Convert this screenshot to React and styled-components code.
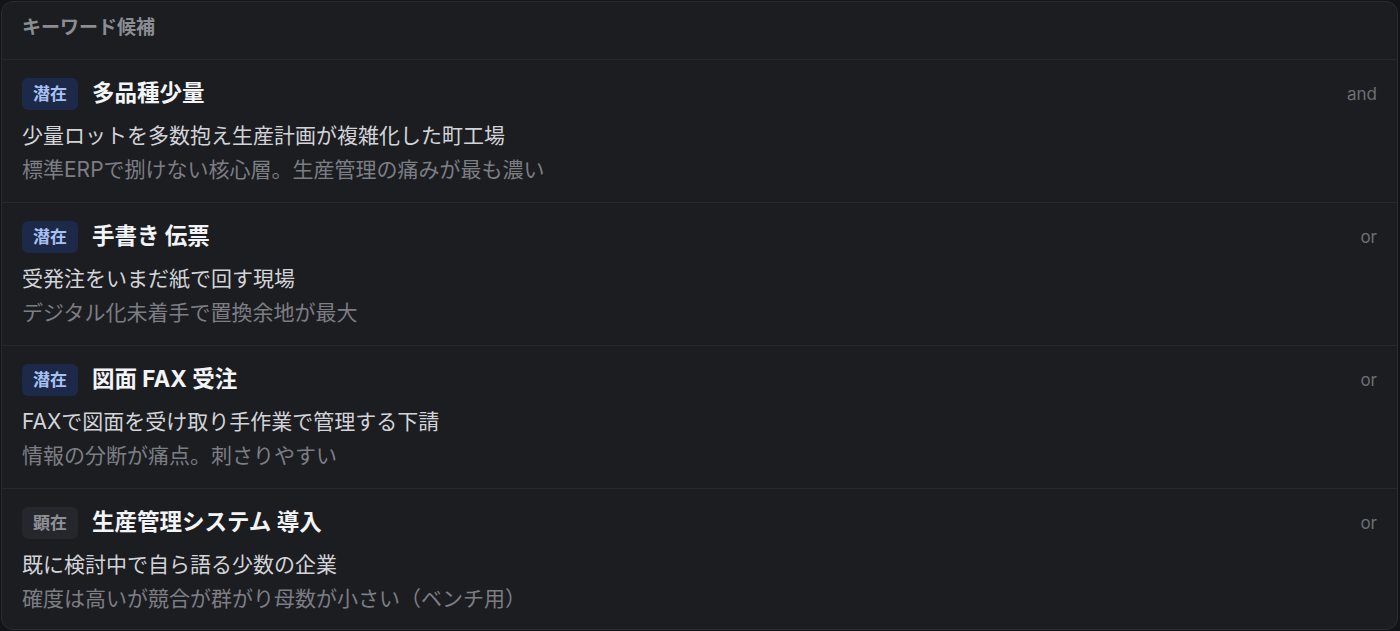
import React from "react";
import styled, { createGlobalStyle } from "styled-components";

const GlobalStyle = createGlobalStyle`
  html, body {
    margin: 0;
    padding: 0;
    background: #131417;
  }
  body {
    font-family: Inter, "Noto Sans CJK JP", sans-serif;
    -webkit-font-smoothing: antialiased;
  }
`;

const Panel = styled.section`
  box-sizing: border-box;
  margin: 1px 0 0 1px;
  width: 1397px;
  background: #1c1d21;
  border: 1px solid #2b2c31;
  border-radius: 12px;
  overflow: hidden;
`;

const PanelHeader = styled.header`
  padding: 13px 20px 18px;
  line-height: 26px;
  font-size: 19px;
  font-weight: 700;
  color: #8b8d93;
  border-bottom: 1px solid #27282d;
`;

const Row = styled.div`
  padding: 18px 20px 15px 20px;
  border-bottom: 1px solid #27282d;

  &:last-child {
    border-bottom: none;
    padding-bottom: 13px;
  }
`;

const RowHead = styled.div`
  display: flex;
  align-items: center;
  height: 32px;
`;

const Badge = styled.span`
  box-sizing: border-box;
  display: inline-flex;
  align-items: center;
  justify-content: center;
  width: 56px;
  height: 32px;
  padding-bottom: 3px;
  border-radius: 6px;
  font-size: 17px;
  font-weight: 700;
  background: ${(p) => (p.$kind === "latent" ? "#1c2949" : "#26272c")};
  color: ${(p) => (p.$kind === "latent" ? "#aac0f2" : "#8f9197")};
`;

const Title = styled.h3`
  margin: 0 0 0 14px;
  padding-bottom: 3px;
  font-size: 22.5px;
  line-height: 30px;
  font-weight: 700;
  color: #f3f4f6;
  flex: 1;
`;

const Op = styled.span`
  font-size: 17px;
  color: #6d6f75;
`;

const Lines = styled.div`
  margin-top: 9px;
`;

const Line = styled.p`
  margin: 0;
  font-size: 21px;
  line-height: 34px;
  color: ${(p) => (p.$muted ? "#7c7e84" : "#d3d4d8")};
`;

const items = [
  {
    kind: "latent",
    badge: "潜在",
    title: "多品種少量",
    op: "and",
    desc: "少量ロットを多数抱え生産計画が複雑化した町工場",
    note: "標準ERPで捌けない核心層。生産管理の痛みが最も濃い",
  },
  {
    kind: "latent",
    badge: "潜在",
    title: "手書き 伝票",
    op: "or",
    desc: "受発注をいまだ紙で回す現場",
    note: "デジタル化未着手で置換余地が最大",
  },
  {
    kind: "latent",
    badge: "潜在",
    title: "図面 FAX 受注",
    op: "or",
    desc: "FAXで図面を受け取り手作業で管理する下請",
    note: "情報の分断が痛点。刺さりやすい",
  },
  {
    kind: "explicit",
    badge: "顕在",
    title: "生産管理システム 導入",
    op: "or",
    desc: "既に検討中で自ら語る少数の企業",
    note: "確度は高いが競合が群がり母数が小さい（ベンチ用）",
  },
];

export default function App() {
  return (
    <>
      <GlobalStyle />
      <Panel>
        <PanelHeader>キーワード候補</PanelHeader>
        {items.map((it) => (
          <Row key={it.title}>
            <RowHead>
              <Badge $kind={it.kind}>{it.badge}</Badge>
              <Title>{it.title}</Title>
              <Op>{it.op}</Op>
            </RowHead>
            <Lines>
              <Line>{it.desc}</Line>
              <Line $muted>{it.note}</Line>
            </Lines>
          </Row>
        ))}
      </Panel>
    </>
  );
}
